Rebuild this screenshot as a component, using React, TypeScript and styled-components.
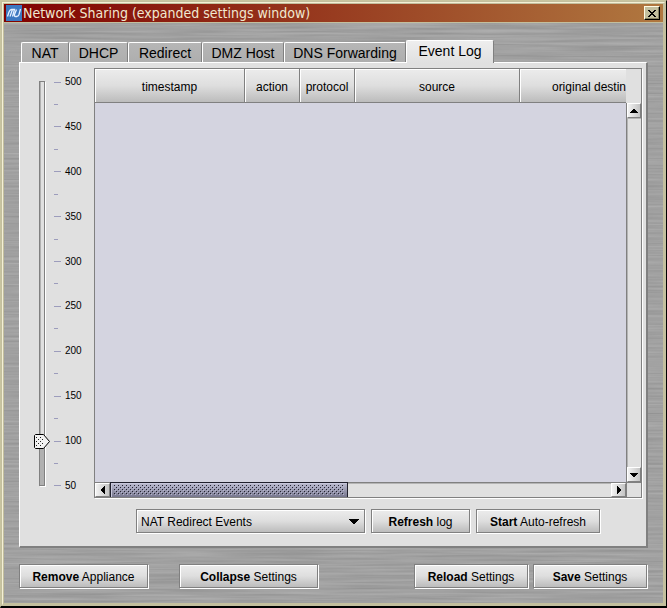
import React, { useState } from "react";
import styled, { createGlobalStyle } from "styled-components";

const GRAY = "#808080";
const FACE = "#e0e0e0";
const METAL = "linear-gradient(#ececec, #dedede 50%, #bcbcbc)";

const svgUrl = (body: string) => `url("data:image/svg+xml,${encodeURIComponent(body)}")`;

const bumps = svgUrl(
  `<svg xmlns="http://www.w3.org/2000/svg" width="4" height="4" shape-rendering="crispEdges"><path d="M0 0h1v1h-1zM2 2h1v1h-1z" fill="#222230"/><path d="M1 1h1v1h-1zM3 3h1v1h-1z" fill="#b4b4d0"/></svg>`
);

const thumbArt = svgUrl(
  `<svg xmlns="http://www.w3.org/2000/svg" width="16" height="15"><path d="M.5 1.5l1-1H9.500l6 7-6 7H1.500l-1-1z" fill="#f2f2f2" stroke="#000"/><path d="M2 3h1v1H2zM6 3h1v1H6zM4 5h1v1H4zM8 5h1v1H8zM2 7h1v1H2zM6 7h1v1H6zM4 9h1v1H4zM8 9h1v1H8zM2 11h1v1H2zM6 11h1v1H6z" fill="#222" shape-rendering="crispEdges"/></svg>`
);

const GlobalStyle = createGlobalStyle`
  * { box-sizing: border-box; }
  body { margin: 0; font: 12px/14px "Liberation Sans", Arial, sans-serif; color: #000; }
  button, select, input { font: inherit; color: inherit; margin: 0; }
`;

const Window = styled.main`
  display: flex;
  flex-direction: column;
  min-height: 100vh;
  border: 1px solid #c8c4a0;
  border-right-color: #000;
  border-bottom: 2px solid #000;
  background: #c3bf9e;
  padding: 1px;
`;

const Frame = styled.div`
  flex: 1;
  display: flex;
  flex-direction: column;
  border: 1px solid #c3bf9e;
  border-left: 1px solid #f4f0d6;
  border-top: 1px solid #f4f0d6;
  padding: 1px;
`;

const TitleBar = styled.header`
  display: flex;
  align-items: center;
  height: 18px;
  padding: 0 3px 0 2px;
  background: linear-gradient(90deg, #800000, #b07840);
`;

const Title = styled.h1`
  flex: 1;
  margin: 0 0 0 1px;
  font: 14px/18px "DejaVu Sans Condensed", "DejaVu Sans", sans-serif;
  color: #f0e8d0;
  white-space: nowrap;
`;

const CloseButton = styled.button`
  display: grid;
  place-items: center;
  width: 16px;
  height: 14px;
  padding: 0;
  background: #c3bf9e;
  border: 1px solid #fffbe4;
  border-right-color: #000;
  border-bottom-color: #000;
  box-shadow: inset -1px -1px #858261;
`;

const Body = styled.div`
  position: relative;
  isolation: isolate;
  flex: 1;
  display: flex;
  flex-direction: column;
  border-top: 1px solid #c3bf9e;
  padding: 17px 15px 15px 15px;
  background: #9f9f9f;
`;

const Texture = styled.svg`
  position: absolute;
  inset: 0;
  z-index: -1;
  width: 100%;
  height: 100%;
`;

const Tabs = styled.div`
  display: flex;
  align-items: flex-end;
  padding-left: 2px;
`;

const Tab = styled.button<{ $width: number; $active?: boolean }>`
  width: ${(p) => p.$width}px;
  height: ${(p) => (p.$active ? 23 : 20)}px;
  margin: 0 0 ${(p) => (p.$active ? "-1px" : "0")};
  padding: 0 0 ${(p) => (p.$active ? 2 : 0)}px;
  z-index: ${(p) => (p.$active ? 1 : 0)};
  border: solid;
  border-width: 1px 1px 0;
  border-color: #fff ${GRAY} #fff #fff;
  border-radius: 2px 2px 0 0;
  background: ${(p) => (p.$active ? `linear-gradient(#eee, ${FACE})` : "linear-gradient(#b6b6b6, #aeaeae)")};
  font-size: 14px;
  line-height: 18px;
  white-space: nowrap;
`;

const Panel = styled.section`
  flex: 1;
  display: grid;
  grid-template: minmax(200px, 1fr) auto / 65px minmax(0, 1fr);
  column-gap: 9px;
  row-gap: 11px;
  padding: 5px 4px 13px 0;
  background: ${FACE};
  border: 1px solid #fff;
  border-right: 2px solid ${GRAY};
  border-bottom: 2px solid ${GRAY};
`;

const Limit = styled.div`
  display: grid;
  grid-template-columns: 16px auto;
  justify-content: start;
  column-gap: 4px;
  padding: 6px 0 4px 14px;
`;

const Groove = styled.div`
  grid-area: 1 / 1;
  width: 6px;
  margin: 7px 0 8px 5px;
  background: #b0b0b0;
  border: 1px solid ${GRAY};
  box-shadow: 1px 1px #fff;
`;

const GrooveEmpty = styled.div`
  margin-left: 1px;
  background: ${FACE};
`;

const Range = styled.input`
  grid-area: 1 / 1;
  appearance: none;
  writing-mode: vertical-lr;
  direction: rtl;
  width: 16px;
  height: 100%;
  background: none;
  &::-webkit-slider-thumb {
    appearance: none;
    width: 16px;
    height: 15px;
    background: ${thumbArt} no-repeat;
  }
`;

const Scale = styled.div`
  display: flex;
  flex-direction: column;
  justify-content: space-between;
  padding: 2px 0;
`;

const Mark = styled.div<{ $minor?: boolean }>`
  display: flex;
  align-items: center;
  gap: 4px;
  height: 12px;
  font-size: 10px;
  line-height: 12px;
  &::before {
    content: "";
    width: ${(p) => (p.$minor ? 4 : 7)}px;
    height: 1px;
    background: #9c9cbc;
  }
`;

const LogPane = styled.div`
  display: grid;
  grid-template: 34px minmax(0, 1fr) 15px / minmax(0, 1fr) 15px;
  border: 1px solid ${GRAY};
  box-shadow: 1px 1px #fff;
`;

const Viewport = styled.div`
  grid-area: 1 / 1 / 3 / 2;
  overflow: hidden;
  background: #d4d4e0;
`;

const LogTable = styled.table`
  table-layout: fixed;
  width: 590px;
  border-collapse: separate;
  border-spacing: 0;
`;

const Th = styled.th<{ $width: number }>`
  width: ${(p) => p.$width}px;
  height: 34px;
  padding: 2px 0 0;
  font-weight: normal;
  background: ${METAL};
  border-right: 1px solid ${GRAY};
  border-bottom: 1px solid ${GRAY};
  box-shadow: inset 1px 1px #fff;
`;

const ScrollBar = styled.div<{ $vertical?: boolean }>`
  grid-area: ${(p) => (p.$vertical ? "2 / 2" : "3 / 1")};
  display: flex;
  flex-direction: ${(p) => (p.$vertical ? "column" : "row")};
  border: solid ${GRAY};
  border-width: ${(p) => (p.$vertical ? "0 0 0 1px" : "1px 0 0")};
`;

const Arrow = styled.button`
  flex: none;
  display: grid;
  place-items: center;
  width: 15px;
  height: 15px;
  padding: 0;
  border: 1px solid #fff;
  border-right-color: ${GRAY};
  border-bottom-color: ${GRAY};
  background: linear-gradient(90deg, #f2f2f2, #c4c4c4);
  ${ScrollBar} > & { max-width: 100%; max-height: 100%; }
`;

const ScrollTrack = styled.div`
  flex: 1;
  display: flex;
  box-shadow: inset 1px 1px #b4b4b4;
`;

const ScrollThumb = styled.div`
  width: 47.5%;
  padding: 2px 3px;
  border: 1px solid #20202c;
  border-width: 0 1px;
  background: linear-gradient(#bcbcd0, #77778e);
  box-shadow: 0 -1px #20202c, inset 1px 1px #c8c8dc;
  &::before {
    content: "";
    display: block;
    height: 100%;
    background: ${bumps};
  }
`;

const ScrollCorner = styled.div`
  border-top: 1px solid ${GRAY};
  border-left: 1px solid ${GRAY};
  grid-area: 3 / 2;
`;

const LogControls = styled.div`
  grid-column: 2;
  display: flex;
  justify-content: center;
  gap: 6px;
`;

const Button = styled.button<{ $width: number }>`
  width: ${(p) => p.$width}px;
  height: 24px;
  padding: 1px 0 0;
  border: 1px solid ${GRAY};
  background: ${METAL};
  box-shadow: 1px 1px #fff, inset 1px 1px #fff;
  white-space: nowrap;
`;

const Combo = styled.div`
  display: grid;
  align-items: center;
  width: 229px;
  height: 24px;
  border: 1px solid ${GRAY};
  background: ${METAL};
  box-shadow: 1px 1px #fff, inset 1px 1px #fff;
  > svg { grid-area: 1 / 1; justify-self: end; margin-right: 5px; pointer-events: none; }
`;

const Select = styled.select`
  grid-area: 1 / 1;
  appearance: none;
  height: 22px;
  padding: 1px 20px 0 4px;
  border: 0;
  background: none;
`;

const Footer = styled.footer`
  display: flex;
  padding: 16px 1px 0 0;
  gap: 5px;
`;

const FooterStart = styled.div`
  display: flex;
  gap: 31px;
  margin-right: auto;
`;

const tabs = [
  { name: "NAT", width: 48 },
  { name: "DHCP", width: 59 },
  { name: "Redirect", width: 74 },
  { name: "DMZ Host", width: 82 },
  { name: "DNS Forwarding", width: 122 },
  { name: "Event Log", width: 88 },
];

const columns = [
  { name: "timestamp", width: 150 },
  { name: "action", width: 55 },
  { name: "protocol", width: 55 },
  { name: "source", width: 165 },
  { name: "original destination", width: 165 },
];

const marks = Array.from({ length: 19 }, (_, i) => 500 - i * 25);

const arrows = {
  up: "M3 0h2v1h1v1h1v1h1v1H0V3h1V2h1V1h1z",
  down: "M0 0h8v1H7v1H6v1H5v1H3V3H2V2H1V1H0z",
  left: "M4 0v8H3V7H2V6H1V5H0V3h1V2h1V1h1V0z",
  right: "M0 0h1v1h1v1h1v1h1v2H3v1H2v1H1v1H0z",
};

function ArrowIcon({ dir }: { dir: keyof typeof arrows }) {
  const tall = dir === "left" || dir === "right";
  return (
    <svg width={tall ? 4 : 8} height={tall ? 8 : 4} shapeRendering="crispEdges" aria-hidden>
      <path d={arrows[dir]} />
    </svg>
  );
}

export default function App() {
  const [tab, setTab] = useState("Event Log");
  const [limit, setLimit] = useState(100);
  return (
    <>
      <GlobalStyle />
      <Window>
        <Frame>
          <TitleBar>
            <svg width="16" height="16" viewBox="0 0 16 16" aria-hidden>
              <rect width="16" height="16" fill="#3c78c0" />
              <path
                d="M1.500 11.500L3 7Q4 4.500 5.500 4.500H6.500L4 11.500M6.500 4.500H8.500L6.500 11.500M10.500 4.500L8.500 9.500Q8 11.500 9.500 11.500H11Q12.500 11 13 9.500L14.500 4"
                fill="none"
                stroke="#e4f0ff"
                strokeWidth="1.300"
              />
            </svg>
            <Title>Network Sharing (expanded settings window)</Title>
            <CloseButton aria-label="Close">
              <svg width="8" height="7" shapeRendering="crispEdges" aria-hidden>
                <path d="M0 0h2v1h1v1h2V1h1V0h2v1H7v1H6v1H5v1h1v1h1v1h1v1H6V6H5V5H3v1H2v1H0V6h1V5h1V4h1V3H2V2H1V1H0z" />
              </svg>
            </CloseButton>
          </TitleBar>
          <Body>
            <Texture aria-hidden>
              <filter id="brushed" x="0" y="0" width="100%" height="100%" colorInterpolationFilters="sRGB">
                <feTurbulence type="fractalNoise" baseFrequency="0.009 0.4" numOctaves="3" seed="4" />
                <feColorMatrix values="0.14 0 0 0 0.56  0.14 0 0 0 0.56  0.14 0 0 0 0.56  0 0 0 0 1" />
              </filter>
              <rect width="100%" height="100%" filter="url(#brushed)" />
            </Texture>
            <Tabs role="tablist">
              {tabs.map((t) => (
                <Tab
                  key={t.name}
                  role="tab"
                  aria-selected={tab === t.name}
                  $width={t.width}
                  $active={tab === t.name}
                  onClick={() => setTab(t.name)}
                >
                  {t.name}
                </Tab>
              ))}
            </Tabs>
            <Panel role="tabpanel" aria-label={tab}>
              <Limit>
                <Groove>
                  <GrooveEmpty style={{ height: `${((500 - limit) / 450) * 100}%` }} />
                </Groove>
                <Range
                  type="range"
                  aria-label="Number of events"
                  min={50}
                  max={500}
                  value={limit}
                  onChange={(e) => setLimit(Number(e.target.value))}
                />
                <Scale>
                  {marks.map((m) => (
                    <Mark key={m} $minor={m % 50 !== 0}>
                      {m % 50 === 0 && m}
                    </Mark>
                  ))}
                </Scale>
              </Limit>
              <LogPane>
                <Viewport>
                  <LogTable>
                    <thead>
                      <tr>
                        {columns.map((c) => (
                          <Th key={c.name} scope="col" $width={c.width}>
                            {c.name}
                          </Th>
                        ))}
                      </tr>
                    </thead>
                  </LogTable>
                </Viewport>
                <ScrollBar $vertical>
                  <Arrow aria-label="Scroll up"><ArrowIcon dir="up" /></Arrow>
                  <ScrollTrack />
                  <Arrow aria-label="Scroll down"><ArrowIcon dir="down" /></Arrow>
                </ScrollBar>
                <ScrollBar>
                  <Arrow aria-label="Scroll left"><ArrowIcon dir="left" /></Arrow>
                  <ScrollTrack><ScrollThumb /></ScrollTrack>
                  <Arrow aria-label="Scroll right"><ArrowIcon dir="right" /></Arrow>
                </ScrollBar>
                <ScrollCorner />
              </LogPane>
              <LogControls>
                <Combo>
                  <Select aria-label="Event type">
                    <option>NAT Redirect Events</option>
                  </Select>
                  <svg width="10" height="5" shapeRendering="crispEdges" aria-hidden>
                    <path d="M0 0h10v1H9v1H8v1H7v1H6v1H4V4H3V3H2V2H1V1H0z" />
                  </svg>
                </Combo>
                <Button $width={99}><b>Refresh</b> log</Button>
                <Button $width={124}><b>Start</b> Auto-refresh</Button>
              </LogControls>
            </Panel>
            <Footer>
              <FooterStart>
                <Button $width={129}><b>Remove</b> Appliance</Button>
                <Button $width={139}><b>Collapse</b> Settings</Button>
              </FooterStart>
              <Button $width={114}><b>Reload</b> Settings</Button>
              <Button $width={114}><b>Save</b> Settings</Button>
            </Footer>
          </Body>
        </Frame>
      </Window>
    </>
  );
}
